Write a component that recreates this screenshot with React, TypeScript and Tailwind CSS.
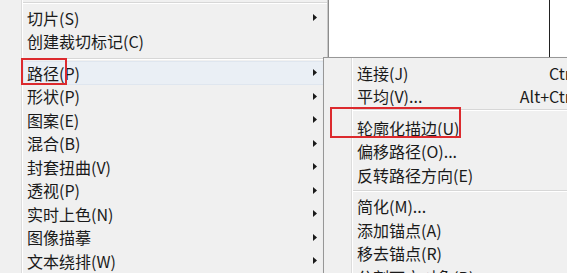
import React from 'react';

type Item = { label: string; arrow?: boolean; active?: boolean; shortcut?: string };

const leftTop: Item[] = [
    { label: '切片(S)', arrow: true },
    { label: '创建裁切标记(C)' },
];

const leftItems: Item[] = [
    { label: '路径(P)', arrow: true, active: true },
    { label: '形状(P)', arrow: true },
    { label: '图案(E)', arrow: true },
    { label: '混合(B)', arrow: true },
    { label: '封套扭曲(V)', arrow: true },
    { label: '透视(P)', arrow: true },
    { label: '实时上色(N)', arrow: true },
    { label: '图像描摹', arrow: true },
    { label: '文本绕排(W)', arrow: true },
];

const subA: Item[] = [
    { label: '连接(J)', shortcut: 'Ctrl+J' },
    { label: '平均(V)...', shortcut: 'Alt+Ctrl+J' },
];
const subB: Item[] = [
    { label: '轮廓化描边(U)' },
    { label: '偏移路径(O)...' },
    { label: '反转路径方向(E)' },
];
const subC: Item[] = [
    { label: '简化(M)...' },
    { label: '添加锚点(A)' },
    { label: '移去锚点(R)' },
    { label: '分割下方对象(B)' },
];

const Arrow = () => (
    <svg width="4" height="7" viewBox="0 0 4 7" className="shrink-0">
        <path d="M0 0 L4 3.5 L0 7 Z" fill="#1a1a1a" />
    </svg>
);

const Row = ({ item }: { item: Item }) => (
    <div
        className={`h-[23.5px] flex items-center justify-between pl-[3px] pr-[9px] border ${
            item.active ? 'bg-[#eaeff5] border-[#dfe6ef]' : 'border-transparent'
        }`}
    >
        <span className="whitespace-nowrap">{item.label}</span>
        {item.arrow && <Arrow />}
    </div>
);

const SubRow = ({ item }: { item: Item }) => (
    <div className="h-[23.5px] flex items-center justify-between pl-[4px] pr-[19px]">
        <span className="whitespace-nowrap">{item.label}</span>
        {item.shortcut && <span className="whitespace-nowrap">{item.shortcut}</span>}
    </div>
);

const Sep = ({ top }: { top: string }) => (
    <div className={`h-[8px] ${top}`}>
        <div className="h-px bg-[#d7d7d7]" />
        <div className="h-px bg-white" />
    </div>
);

export default function App() {
    return (
        <div
            className="relative w-[567px] h-[273px] overflow-hidden bg-[#f0f0f0] flex text-[16px] text-[#1a1a1a]"
            style={{ fontFamily: '"Noto Sans CJK SC", "Noto Sans", sans-serif' }}
        >
            {/* main menu */}
            <div className="w-[328px] h-full flex border-r border-[#c8c8c8] shrink-0">
                <div className="w-[22px] h-full border-r border-[#dcdcdc]" />
                <div className="w-px h-full bg-white" />
                <div className="flex-1 flex flex-col">
                    <div className="h-[6px] pt-[2px]">
                        <div className="h-px bg-[#d7d7d7]" />
                        <div className="h-px bg-white" />
                    </div>
                    {leftTop.map((it) => (
                        <Row key={it.label} item={it} />
                    ))}
                    <Sep top="pt-[5px]" />
                    {leftItems.map((it) => (
                        <Row key={it.label} item={it} />
                    ))}
                </div>
            </div>

            {/* canvas behind */}
            <div className="flex-1 h-[57px] bg-white border-l border-[#8c8c8c] flex justify-end">
                <div className="w-px h-full bg-[#222] mr-[17px]" />
            </div>

            {/* sub menu */}
            <div className="absolute left-[323px] top-[57px] w-[290px] h-[240px] bg-[#f0f0f0] border border-[#979797] flex shadow-[2px_2px_3px_rgba(0,0,0,0.2)]">
                <div className="w-[28px] h-full border-r border-[#dcdcdc]" />
                <div className="w-px h-full bg-white" />
                <div className="flex-1 flex flex-col pt-[3px]">
                    {subA.map((it) => (
                        <SubRow key={it.label} item={it} />
                    ))}
                    <Sep top="pt-[1px]" />
                    {subB.map((it) => (
                        <SubRow key={it.label} item={it} />
                    ))}
                    <Sep top="pt-[3px]" />
                    {subC.map((it) => (
                        <SubRow key={it.label} item={it} />
                    ))}
                </div>
            </div>

            {/* annotation boxes */}
            <div className="absolute left-[21px] top-[58px] w-[46px] h-[27px] border-2 border-[#dc2a2e]" />
            <div className="absolute left-[330px] top-[107px] w-[131px] h-[31px] border-2 border-[#dc2a2e]" />
        </div>
    );
}
